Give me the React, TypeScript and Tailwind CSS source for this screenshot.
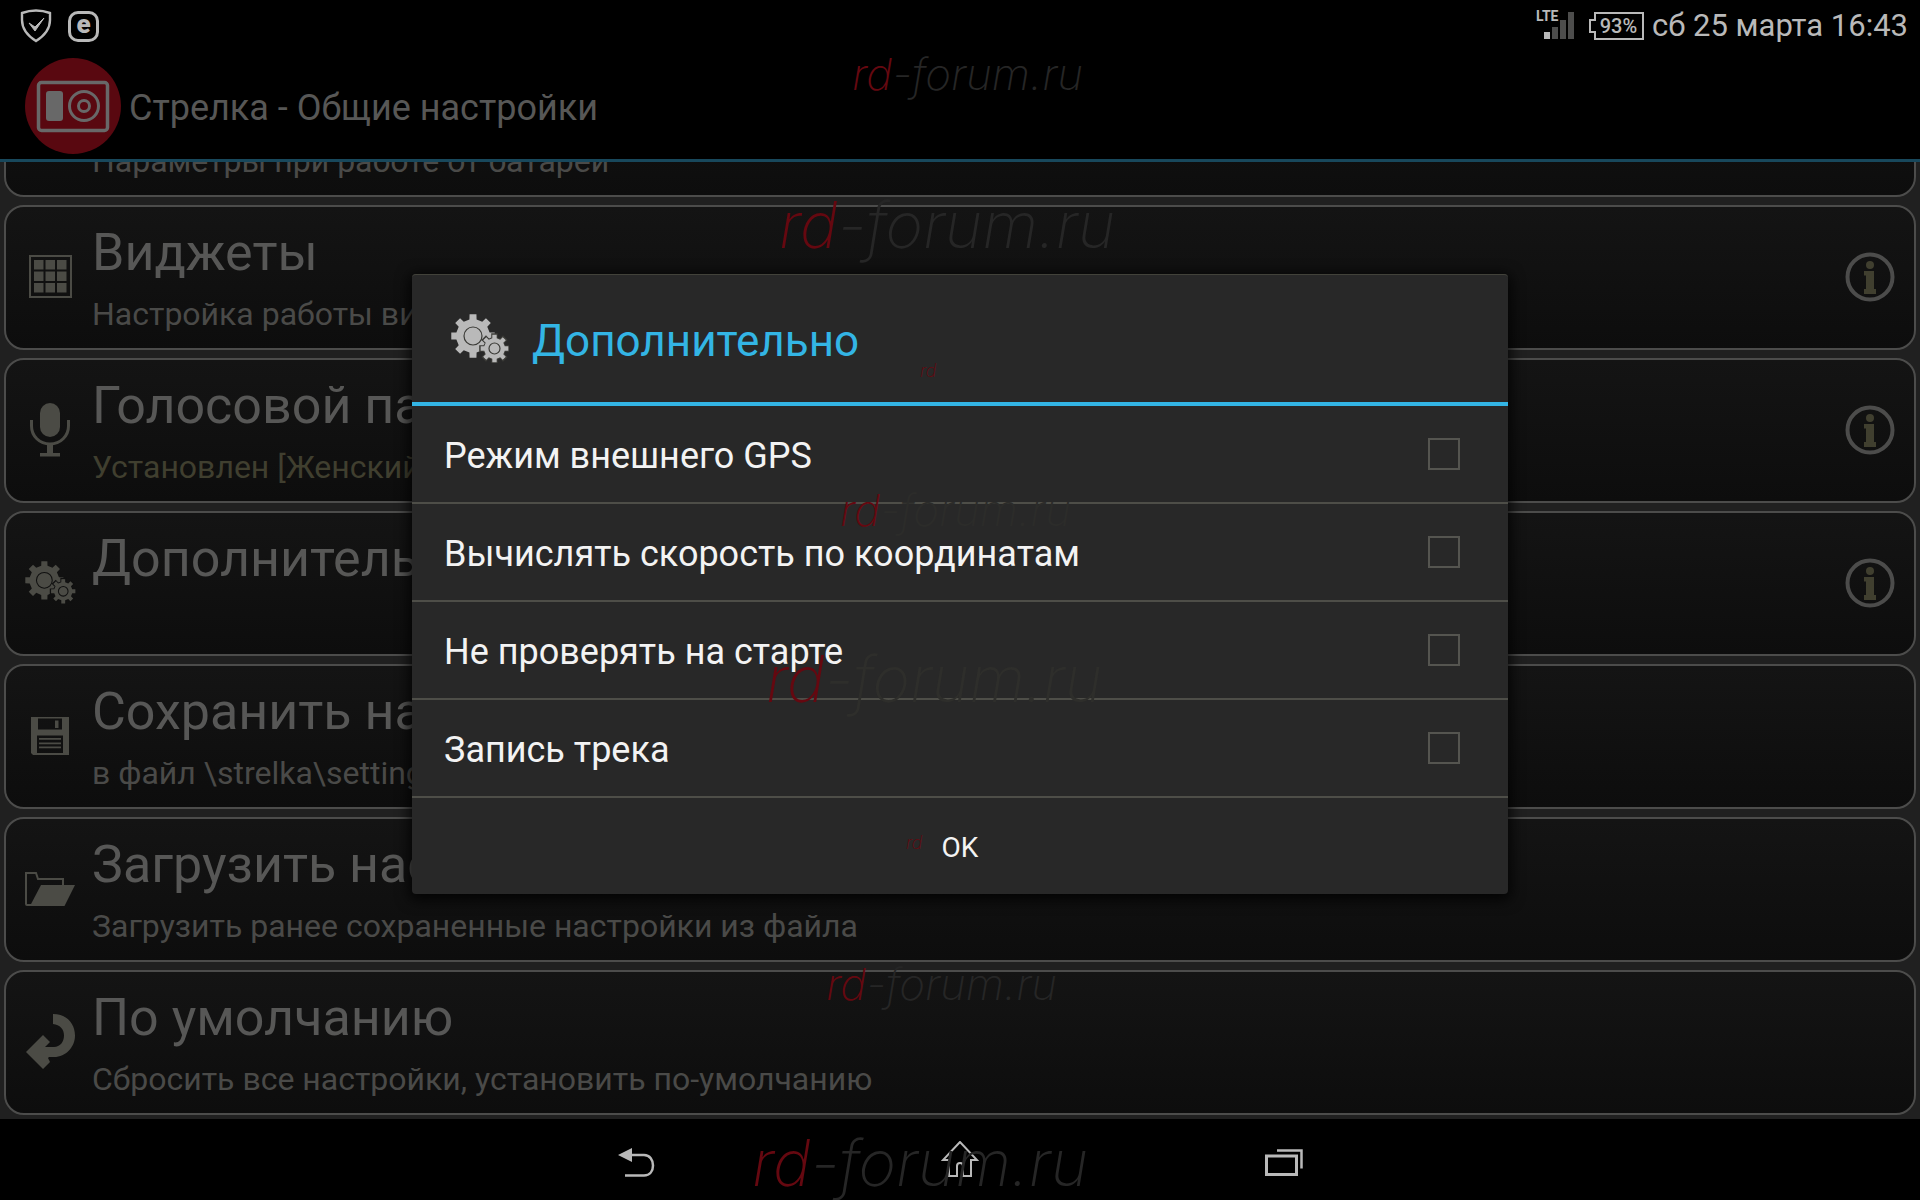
import type { ReactNode } from 'react';
import clsx from 'clsx';

// outline of a cog with straight-sided teeth
function cog(cx: number, cy: number, outer: number, inner: number, teeth = 8) {
  const step = (Math.PI * 2) / teeth;
  const points: string[] = [];
  const add = (r: number, a: number) =>
    points.push(`${(cx + r * Math.sin(a)).toFixed(2)},${(cy - r * Math.cos(a)).toFixed(2)}`);

  for (let i = 0; i < teeth; i++) {
    const a = i * step;
    add(inner, a - step * 0.27);
    add(outer, a - step * 0.2);
    add(outer, a + step * 0.2);
    add(inner, a + step * 0.27);
  }
  return points.join(' ');
}

function GearsIcon({ className, gap }: { className: string; gap: string }) {
  return (
    <svg viewBox="0 0 58 49" className={className} fill="currentColor" aria-hidden="true">
      <polygon points={cog(22, 22, 22, 17)} />
      <circle cx="22" cy="22" r="9" fill="none" className={gap} strokeWidth="1.2" />
      <polygon points={cog(43.5, 34.5, 14.5, 10.5)} className={gap} strokeWidth="2" />
      <polygon points={cog(43.5, 34.5, 14, 10.5)} />
      <circle cx="43.5" cy="34.5" r="5.5" fill="none" className={gap} strokeWidth="1.2" />
    </svg>
  );
}

function GridIcon() {
  return (
    <svg viewBox="0 0 43 43" className="size-[43px]" fill="currentColor" aria-hidden="true">
      <rect x="1" y="1" width="41" height="41" fill="none" stroke="currentColor" strokeWidth="2" />
      {[5, 16.5, 28].map((y) =>
        [5, 16.5, 28].map((x) => <rect key={`${x}-${y}`} x={x} y={y} width="9.5" height="9.5" />),
      )}
    </svg>
  );
}

function MicIcon() {
  return (
    <svg viewBox="0 0 40 54" className="h-[54px] w-10" fill="currentColor" aria-hidden="true">
      <rect x="10" y="0" width="20" height="34" rx="10" />
      <path d="M1.5 17v6c0 10 8 18 18.500 18s18.500-8 18.500-18v-6" fill="none" stroke="currentColor" strokeWidth="3" />
      <path d="M17 41h6v9h7v3.500H10V50h7z" />
    </svg>
  );
}

function FloppyIcon() {
  return (
    <svg viewBox="0 0 38 38" className="size-[38px]" fill="currentColor" aria-hidden="true">
      <path fillRule="evenodd" d="M0 0h38v38H2l-2-2zM7 1.500v11h24v-11zM6 18.500v17.500h26V18.500z" />
      <path d="M24 3.500h3.500v7.500H24zM8 21h22v1.800H8zM8 25.500h22v1.800H8zM8 29.500h22v1.800H8z" />
    </svg>
  );
}

function FolderIcon() {
  return (
    <svg viewBox="0 0 50 34" className="h-[34px] w-[50px]" aria-hidden="true">
      <path d="M6 33H2q-1 0-1-1V1h10l2 6h25v7" fill="none" stroke="currentColor" strokeWidth="2" />
      <path d="M16 13h34L39.500 34H5z" fill="currentColor" />
    </svg>
  );
}

function ReturnIcon() {
  return (
    <svg viewBox="0 0 49 55" className="h-[55px] w-[49px]" fill="currentColor" aria-hidden="true">
      <path d="M27 0C41 0 49 10 49 21.500S40 43 28 43h-5l-1 1 2 4-7 7L0 38l17-17 7 7-5 5h9c6 0 10-5 10-11.500S34 11 27 10z" />
    </svg>
  );
}

function InfoIcon() {
  return (
    <svg viewBox="0 0 50 50" className="size-[50px]" aria-hidden="true">
      <circle cx="25" cy="25" r="22.500" fill="none" stroke="#4c4c4b" strokeWidth="4" />
      <g fill="#403f2f">
        <circle cx="25" cy="13" r="4" />
        <path d="M19 19h10v18h2v5H19v-5h2V23.500h-2z" />
      </g>
    </svg>
  );
}

type Item = {
  title: string;
  summary: string;
  icon?: ReactNode;
  info?: boolean;
  active?: boolean;
};

const items: Item[] = [
  { title: '', summary: 'Параметры при работе от батареи' },
  { title: 'Виджеты', summary: 'Настройка работы виджетов', icon: <GridIcon />, info: true },
  { title: 'Голосовой пакет', summary: 'Установлен [Женский]', icon: <MicIcon />, info: true, active: true },
  {
    title: 'Дополнительно',
    summary: '',
    icon: <GearsIcon className="h-[43px] w-[51px]" gap="stroke-[#101010]" />,
    info: true,
  },
  { title: 'Сохранить настройки', summary: 'в файл \\strelka\\settings', icon: <FloppyIcon /> },
  { title: 'Загрузить настройки', summary: 'Загрузить ранее сохраненные настройки из файла', icon: <FolderIcon /> },
  { title: 'По умолчанию', summary: 'Сбросить все настройки, установить по-умолчанию', icon: <ReturnIcon /> },
];

const options = [
  { id: 'external-gps', label: 'Режим внешнего GPS' },
  { id: 'calc-speed', label: 'Вычислять скорость по координатам' },
  { id: 'skip-check', label: 'Не проверять на старте' },
  { id: 'record-track', label: 'Запись трека' },
];

function StatusBar() {
  return (
    <div className="flex h-[52px] shrink-0 items-center justify-between pr-3 pl-5 text-[#b9b9b9]">
      <div className="flex items-center gap-4">
        <svg viewBox="0 0 32 34" className="h-[34px] w-8" fill="none" stroke="currentColor" aria-hidden="true">
          <path d="M2 4Q16-1 30 4v7c0 9-6 16-14 21C8 27 2 20 2 11z" strokeWidth="2.400" />
          <path d="M9 14l6 8 9-13-9 9z" fill="currentColor" strokeWidth="1" />
        </svg>
        <span className="flex size-[31px] items-center justify-center rounded-[10px] border-[3px] border-current text-[26px] leading-[26px] font-black">
          <span className="pb-1">e</span>
        </span>
      </div>

      <div className="flex items-center gap-2">
        <div className="flex items-center gap-[14px]">
          <div className="relative h-8 w-[39px]">
            <span className="absolute top-0 left-0 text-sm leading-3 font-bold">LTE</span>
            <svg viewBox="0 0 39 32" className="h-8 w-[39px]" aria-hidden="true">
              <rect x="8" y="22" width="6" height="7" fill="#b9b9b9" />
              <path d="M16 17h6v12h-6zM24 10h6v19h-6zM32 2h6v27h-6z" fill="#4d4d4c" />
            </svg>
          </div>
          <div className="relative flex h-7 w-[55px] items-center justify-center pl-1 text-xl font-medium">
            <svg viewBox="0 0 55 28" className="absolute inset-0" fill="none" stroke="currentColor" strokeWidth="2" aria-hidden="true">
              <path d="M6 1h48v26H6v-7H1V8h5z" />
            </svg>
            93%
          </div>
        </div>
        <time className="text-[31px] leading-10">сб 25 марта 16:43</time>
      </div>
    </div>
  );
}

function Header() {
  return (
    <header className="flex h-[110px] shrink-0 items-center gap-2 border-b-[3px] border-[#18485c] pl-[25px]">
      <svg viewBox="0 0 96 96" className="size-24" aria-hidden="true">
        <circle cx="48" cy="48" r="48" fill="#590810" />
        <g fill="none" stroke="#686868">
          <rect x="13.500" y="24.500" width="69" height="48" rx="3" strokeWidth="3.500" />
          <circle cx="59" cy="48" r="14.500" strokeWidth="3" />
          <circle cx="59" cy="48" r="5.500" strokeWidth="3" />
        </g>
        <rect x="21" y="33" width="17" height="30" rx="3" fill="#686868" />
      </svg>
      <h1 className="pt-1 text-[36px] leading-[44px] text-[#575756]">Стрелка - Общие настройки</h1>
    </header>
  );
}

function Card({ item }: { item: Item }) {
  return (
    <li className="flex h-[145px] shrink-0 rounded-[20px] border-2 border-[#4c4c4b] bg-linear-to-b from-[#141414] to-[#0d0d0d]">
      <div className="flex w-[86px] shrink-0 items-center justify-center pb-0.5 pl-0.5 text-[#4b4b45]">{item.icon}</div>
      <div className="min-w-0 flex-1 pt-[14px] whitespace-nowrap">
        <h2 className="h-16 text-[52px] leading-[64px] text-[#575756]">{item.title}</h2>
        <p className={clsx('mt-[9px] text-[32px] leading-10', item.active ? 'text-[#403f2f]' : 'text-[#4a4a48]')}>
          {item.summary}
        </p>
      </div>
      {item.info && (
        <button type="button" aria-label="Информация" className="flex w-[88px] shrink-0 items-center justify-center pb-0.5">
          <InfoIcon />
        </button>
      )}
    </li>
  );
}

function OptionsDialog() {
  return (
    <div className="absolute inset-0 flex items-center justify-center pb-8">
      <div
        role="dialog"
        aria-modal="true"
        aria-labelledby="dialog-title"
        className="w-full max-w-[1096px] rounded-[4px] bg-[#282828] text-[#f3f3f3] shadow-[0_3px_14px_3px_rgba(0,0,0,0.8)]"
      >
        <div className="flex h-[132px] items-center gap-[23px] rounded-t-[4px] border-t border-b-4 border-t-[#42423a] border-b-[#33b5e5] pl-[39px]">
          <GearsIcon className="h-[49px] w-[58px] text-[#b9b9b9]" gap="stroke-[#3c3c38]" />
          <h2 id="dialog-title" className="pt-1 text-[44px] leading-[52px] text-[#33b5e5]">
            Дополнительно
          </h2>
        </div>
        <ul>
          {options.map((option) => (
            <li key={option.id} className="border-b-2 border-[#4e4e48]">
              <label htmlFor={option.id} className="flex h-24 items-center justify-between pr-12 pl-8">
                <span className="pt-1 text-[36px] leading-[44px]">{option.label}</span>
                <input
                  id={option.id}
                  type="checkbox"
                  className="size-8 appearance-none border-2 border-[#555550] checked:bg-[#33b5e5]"
                />
              </label>
            </li>
          ))}
        </ul>
        <button type="button" className="block h-24 w-full pt-1 text-[28px]">
          OK
        </button>
      </div>
    </div>
  );
}

function NavBar() {
  return (
    <nav className="flex h-[81px] shrink-0 items-center justify-center text-[#b9b9b9]">
      <button type="button" aria-label="Назад" className="flex h-full w-[324px] items-center justify-center">
        <svg viewBox="0 0 38 36" className="h-9 w-[38px]" aria-hidden="true">
          <path d="M1 13L15 6v14z" fill="currentColor" />
          <path d="M13 13h14c6 0 9 5 9 10.500S33 33.500 27 33.500H8" fill="none" stroke="currentColor" strokeWidth="2.500" />
        </svg>
      </button>
      <button type="button" aria-label="Домой" className="flex h-full w-[324px] items-center justify-center">
        <svg viewBox="0 0 38 38" className="size-[38px]" fill="none" stroke="currentColor" strokeWidth="2" aria-hidden="true">
          <path d="M19 1L2 19h6v16h8V25q0-3 3-3t3 3v10h8V19h6z" />
        </svg>
      </button>
      <button type="button" aria-label="Недавние" className="flex h-full w-[324px] items-center justify-center">
        <svg viewBox="0 0 38 32" className="h-8 w-[38px]" fill="none" stroke="currentColor" aria-hidden="true">
          <path d="M1.500 12h30v18.500h-30z" strokeWidth="3" />
          <path d="M12 6.500h24.500v18" strokeWidth="2.500" />
        </svg>
      </button>
    </nav>
  );
}

function Watermark({ className, rest = 'text-[#262626]' }: { className: string; rest?: string }) {
  return (
    <span className={clsx('absolute font-[Inter,sans-serif] leading-none font-extralight whitespace-nowrap text-[#650810] italic', className)}>
      rd{rest && <span className={rest}>-forum.ru</span>}
    </span>
  );
}

function Watermarks() {
  return (
    <div className="pointer-events-none absolute inset-0 overflow-hidden" aria-hidden="true">
      <Watermark className="top-[52px] left-[852px] text-[44px]" />
      <Watermark className="top-[193px] left-[779px] text-[64px]" />
      <Watermark className="top-[362px] left-[920px] text-[18px]" rest="" />
      <Watermark className="top-[488px] left-[840px] text-[44px]" rest="text-[#2c2c2a]" />
      <Watermark className="top-[647px] left-[766px] text-[64px]" rest="text-[#2e2e2b]" />
      <Watermark className="top-[834px] left-[906px] text-[18px]" rest="" />
      <Watermark className="top-[962px] left-[826px] text-[44px]" />
      <Watermark className="top-[1131px] left-[752px] text-[64px]" />
    </div>
  );
}

export default function App() {
  return (
    <div className="relative flex h-screen flex-col overflow-hidden bg-black font-[Roboto,sans-serif]">
      <StatusBar />
      <Header />
      <main className="flex min-h-0 flex-1 flex-col justify-end overflow-hidden bg-[#202020] p-1">
        <ul className="flex flex-col gap-2">
          {items.map((item) => (
            <Card key={item.summary + item.title} item={item} />
          ))}
        </ul>
      </main>
      <NavBar />
      <OptionsDialog />
      <Watermarks />
    </div>
  );
}
